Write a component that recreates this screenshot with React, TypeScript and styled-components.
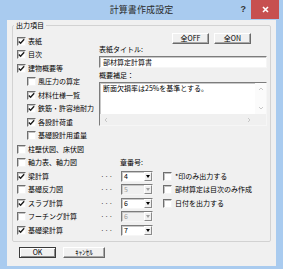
import React from 'react'
import styled, { createGlobalStyle } from 'styled-components'

const GlobalStyle = createGlobalStyle`
  html, body {
    margin: 0;
    padding: 0;
    background: #ffffff;
  }
  body {
    font-family: "Noto Sans CJK JP", "Noto Sans", sans-serif;
    color: #000;
  }
`

const Window = styled.div`
  width: 283px;
  height: 269px;
  background: #a9cbef;
  display: flex;
  flex-direction: column;
  overflow: hidden;
`

const TitleBar = styled.div`
  height: 20px;
  display: grid;
  grid-template-columns: 1fr auto 1fr;
  align-items: start;
`

const TitleText = styled.div`
  grid-column: 2;
  font-size: 9px;
  line-height: 20px;
  color: #2b2b2b;
  letter-spacing: 0.1px;
`

const TitleControls = styled.div`
  grid-column: 3;
  justify-self: end;
  display: flex;
  align-items: flex-start;
  gap: 5px;
  padding-right: 4px;
`

const HelpGlyph = styled.span`
  font-family: "Liberation Sans", Arial, sans-serif;
  font-weight: bold;
  font-size: 9px;
  line-height: 19px;
  color: #333;
`

const CloseButton = styled.div`
  width: 28px;
  height: 19px;
  background: #c75050;
  display: flex;
  align-items: center;
  justify-content: center;
`

const Client = styled.div`
  flex: 1;
  margin: 0 7px 3px;
  background: #f0f0f0;
  display: flex;
  flex-direction: column;
`

const Group = styled.fieldset`
  margin: 0 5px;
  padding: 4.25px 3px 4.25px 4px;
  border: 1px solid #d2d2d2;
  border-radius: 2px;
  min-inline-size: 0;
`

const Legend = styled.legend`
  font-size: 7px;
  line-height: 10px;
  padding: 0 2px;
  margin-left: -3px;
`

const Grid = styled.div`
  display: grid;
  grid-template-columns: 82px 21px 40px 1fr;
  grid-auto-rows: 13.5px;
`

const Cell = styled.div<{ $col?: string; $indent?: boolean; $pad?: number }>`
  grid-column: ${p => p.$col || 'auto'};
  display: flex;
  align-items: center;
  padding-left: ${p => (p.$indent ? 10 : p.$pad || 0)}px;
  min-width: 0;
`

const CheckLabel = styled.span<{ $gap?: number }>`
  display: inline-flex;
  align-items: center;
  gap: ${p => p.$gap ?? 2}px;
  font-size: 7px;
  line-height: 9px;
  white-space: nowrap;
`

const Box = styled.span`
  width: 9px;
  height: 9px;
  box-sizing: border-box;
  background: #ffffff;
  border: 1px solid;
  border-color: #6f6f6f #f4f4f4 #f4f4f4 #6f6f6f;
  box-shadow: inset 1px 1px 0 #c4c4c4;
  display: flex;
  align-items: center;
  justify-content: center;
  flex: none;
`

const Text = styled.span`
  font-size: 7px;
  line-height: 9px;
  white-space: nowrap;
`

const Dots = styled.span`
  font-family: "Liberation Sans", Arial, sans-serif;
  font-size: 8px;
  line-height: 9px;
  letter-spacing: 1.6px;
  color: #222;
`

const Panel = styled.div`
  grid-column: 2 / 5;
  grid-row: 1 / 8;
  align-self: start;
  margin-top: -1.25px;
  display: flex;
  flex-direction: column;
`

const ButtonRow = styled.div`
  display: flex;
  justify-content: flex-end;
  gap: 5px;
  padding-right: 16px;
`

const RaisedButton = styled.div<{ $w: number; $default?: boolean }>`
  width: ${p => p.$w}px;
  height: 11px;
  box-sizing: border-box;
  background: #f0f0f0;
  border: 1px solid;
  border-color: ${p => (p.$default ? '#3a3a3a' : '#ffffff #6a6a6a #6a6a6a #ffffff')};
  box-shadow: ${p =>
    p.$default ? 'inset 1px 1px 0 #ffffff, inset -1px -1px 0 #8a8a8a' : 'inset -1px -1px 0 #a8a8a8'};
  display: flex;
  align-items: center;
  justify-content: center;
  font-size: 7px;
  line-height: 9px;
`

const FieldLabel = styled.div<{ $top: number }>`
  font-size: 7px;
  line-height: 9px;
  margin-top: ${p => p.$top}px;
`

const Sunken = styled.div`
  box-sizing: border-box;
  background: #ffffff;
  border: 1px solid;
  border-color: #7c7c7c #f6f6f6 #f6f6f6 #7c7c7c;
  box-shadow: inset 1px 1px 0 #c8c8c8;
`

const TitleInput = styled(Sunken)`
  height: 12px;
  margin-top: 2px;
  padding-left: 3px;
  font-size: 7px;
  line-height: 10px;
`

const Memo = styled(Sunken)`
  height: 44px;
  margin-top: 2px;
  display: grid;
  grid-template-columns: 1fr 11px;
  grid-template-rows: 1fr 11px;
`

const MemoText = styled.div`
  padding: 1px 0 0 3px;
  font-size: 7px;
  line-height: 9px;
`

const VScroll = styled.div`
  background: #fbfbfb;
  display: flex;
  flex-direction: column;
  justify-content: space-between;
  align-items: center;
  padding: 3px 0;
`

const HScroll = styled.div`
  background: #f0f0f0;
  display: flex;
  justify-content: space-between;
  align-items: center;
  padding: 0 3px;
`

const Corner = styled.div`
  background: #f0f0f0;
`

const SelectBox = styled(Sunken)<{ $disabled?: boolean }>`
  width: 32px;
  height: 11px;
  margin-left: 1px;
  display: flex;
  background: ${p => (p.$disabled ? '#f0f0f0' : '#ffffff')};
`

const SelectValue = styled.span<{ $disabled?: boolean }>`
  flex: 1;
  padding-left: 2px;
  font-size: 7px;
  line-height: 9px;
  color: ${p => (p.$disabled ? '#9a9a9a' : '#000')};
`

const DropButton = styled.span`
  width: 8px;
  box-sizing: border-box;
  background: #f0f0f0;
  border: 1px solid;
  border-color: #ffffff #8a8a8a #8a8a8a #ffffff;
  display: flex;
  align-items: center;
  justify-content: center;
`

const Arrow = styled.span<{ $disabled?: boolean }>`
  width: 0;
  height: 0;
  border-left: 2.5px solid transparent;
  border-right: 2.5px solid transparent;
  border-top: 3px solid ${p => (p.$disabled ? '#a0a0a0' : '#000')};
`

const Footer = styled.div`
  display: flex;
  gap: 7px;
  padding: 5px 0 0 12px;
`

type Item = { label: string; checked: boolean; indent?: boolean }

const topItems: Item[] = [
  { label: '表紙', checked: true },
  { label: '目次', checked: true },
  { label: '建物概要等', checked: true },
  { label: '風圧力の算定', checked: false, indent: true },
  { label: '材料仕様一覧', checked: true, indent: true },
  { label: '鉄筋・許容地耐力', checked: true, indent: true },
  { label: '各設計荷重', checked: true, indent: true },
  { label: '基礎設計用重量', checked: false, indent: true },
  { label: '柱壁伏図、床伏図', checked: false }
]

const calcRows = [
  { label: '梁計算', checked: true, no: '4', disabled: false, option: '*印のみ出力する' },
  { label: '基礎反力図', checked: false, no: '5', disabled: true, option: '部材算定は目次のみ作成' },
  { label: 'スラブ計算', checked: true, no: '6', disabled: false, option: '日付を出力する' },
  { label: 'フーチング計算', checked: false, no: '6', disabled: true },
  { label: '基礎梁計算', checked: true, no: '7', disabled: false }
]

const Check = ({ checked, label, gap }: { checked: boolean; label: string; gap?: number }) => (
  <CheckLabel $gap={gap}>
    <Box>
      {checked && (
        <svg width="7" height="7" viewBox="0 0 7 7">
          <polyline points="0.8,3.4 2.6,5.3 6.2,1.2" fill="none" stroke="#1e1e1e" strokeWidth="1.4" />
        </svg>
      )}
    </Box>
    {label}
  </CheckLabel>
)

const Chevron = ({ dir }: { dir: 'up' | 'down' | 'left' | 'right' }) => {
  const pts = {
    up: '1,4 3,2 5,4',
    down: '1,2 3,4 5,2',
    left: '4,1 2,3 4,5',
    right: '2,1 4,3 2,5'
  }[dir]
  return (
    <svg width="6" height="6" viewBox="0 0 6 6">
      <polyline points={pts} fill="none" stroke="#c2c2c2" strokeWidth="0.9" />
    </svg>
  )
}

const App: React.FC = () => {
  return (
    <>
      <GlobalStyle />
      <Window>
        <TitleBar>
          <TitleText>計算書作成設定</TitleText>
          <TitleControls>
            <HelpGlyph>?</HelpGlyph>
            <CloseButton>
              <svg width="7" height="7" viewBox="0 0 7 7">
                <path d="M1 1 L6 6 M6 1 L1 6" stroke="#ffffff" strokeWidth="1.6" />
              </svg>
            </CloseButton>
          </TitleControls>
        </TitleBar>

        <Client>
          <Group>
            <Legend>出力項目</Legend>
            <Grid>
              {topItems.map(item => (
                <Cell key={item.label} $col="1" $indent={item.indent}>
                  <Check checked={item.checked} label={item.label} />
                </Cell>
              ))}

              <Panel>
                <ButtonRow>
                  <RaisedButton $w={37}>全OFF</RaisedButton>
                  <RaisedButton $w={37}>全ON</RaisedButton>
                </ButtonRow>
                <FieldLabel $top={1}>表紙タイトル:</FieldLabel>
                <TitleInput>部材算定計算書</TitleInput>
                <FieldLabel $top={3}>概要補足：</FieldLabel>
                <Memo>
                  <MemoText>断面欠損率は25%を基準とする。</MemoText>
                  <VScroll>
                    <Chevron dir="up" />
                    <Chevron dir="down" />
                  </VScroll>
                  <HScroll>
                    <Chevron dir="left" />
                    <Chevron dir="right" />
                  </HScroll>
                  <Corner />
                </Memo>
              </Panel>

              <Cell $col="1">
                <Check checked={false} label="軸力表、軸力図" />
              </Cell>
              <Cell $col="3 / 5">
                <Text>章番号:</Text>
              </Cell>

              {calcRows.map(row => (
                <React.Fragment key={row.label}>
                  <Cell $col="1">
                    <Check checked={row.checked} label={row.label} />
                  </Cell>
                  <Cell $col="2" $pad={2}>
                    <Dots>···</Dots>
                  </Cell>
                  <Cell $col="3">
                    <SelectBox $disabled={row.disabled}>
                      <SelectValue $disabled={row.disabled}>{row.no}</SelectValue>
                      <DropButton>
                        <Arrow $disabled={row.disabled} />
                      </DropButton>
                    </SelectBox>
                  </Cell>
                  <Cell $col="4" $pad={3}>
                    {row.option && <Check checked={false} label={row.option} gap={3} />}
                  </Cell>
                </React.Fragment>
              ))}
            </Grid>
          </Group>

          <Footer>
            <RaisedButton $w={37} $default>OK</RaisedButton>
            <RaisedButton $w={42}>ｷｬﾝｾﾙ</RaisedButton>
          </Footer>
        </Client>
      </Window>
    </>
  )
}

export default App
